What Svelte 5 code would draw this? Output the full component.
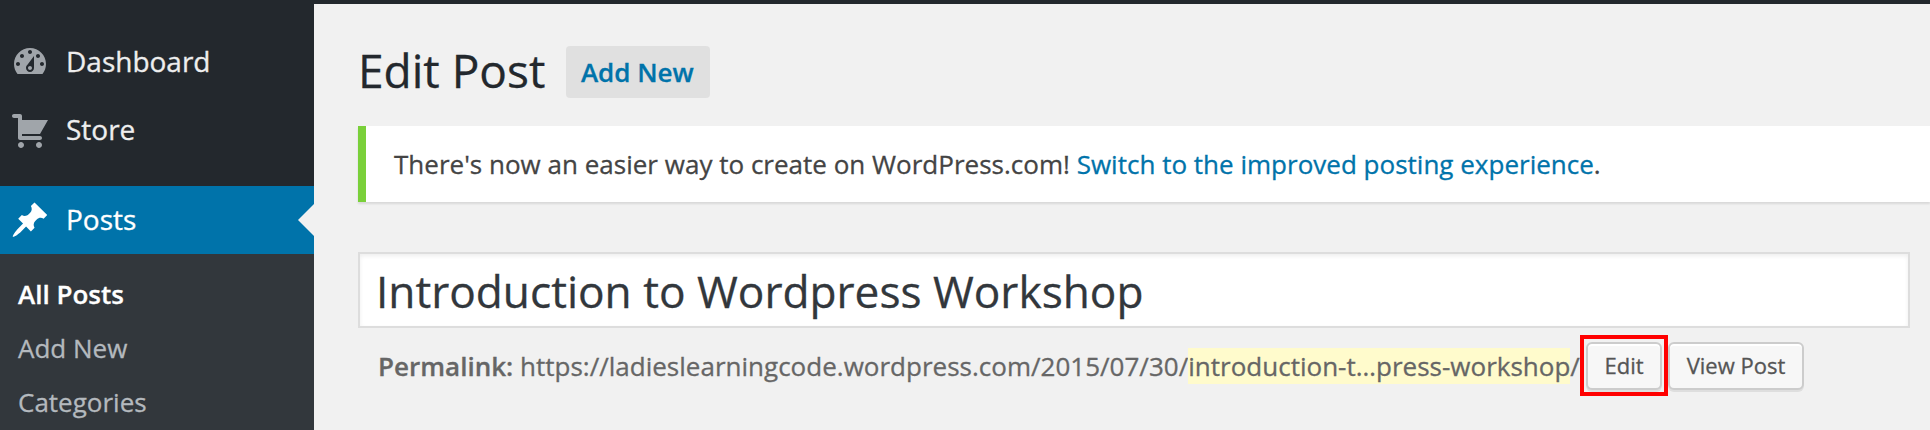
<script>
  const icons = {
    dashboard:
      'M3.76 16h12.48c1.1-1.37 1.76-3.11 1.76-5 0-4.42-3.58-8-8-8s-8 3.58-8 8c0 1.89.66 3.63 1.76 5zM10 4c.55 0 1 .45 1 1s-.45 1-1 1-1-.45-1-1 .45-1 1-1zM6 6c.55 0 1 .45 1 1s-.45 1-1 1-1-.45-1-1 .45-1 1-1zm8 0c.55 0 1 .45 1 1s-.45 1-1 1-1-.45-1-1 .45-1 1-1zm-5.37 5.55L12 7v6c0 1.1-.9 2-2 2s-2-.9-2-2c0-.57.24-1.08.63-1.45zM4 10c.55 0 1 .45 1 1s-.45 1-1 1-1-.45-1-1 .45-1 1-1zm12 0c.55 0 1 .45 1 1s-.45 1-1 1-1-.45-1-1 .45-1 1-1zm-5 3c0-.55-.45-1-1-1s-1 .45-1 1 .45 1 1 1 1-.45 1-1z',
    cart:
      'M6 13h9c.55 0 1 .45 1 1s-.45 1-1 1H5c-.55 0-1-.45-1-1V4H2c-.55 0-1-.45-1-1s.45-1 1-1h3c.55 0 1 .45 1 1v2h13l-4 7H6v1zm-.5 3c.83 0 1.5.67 1.5 1.5S6.33 19 5.5 19 4 18.33 4 17.5 4.67 16 5.5 16zm9 0c.83 0 1.5.67 1.5 1.5s-.67 1.5-1.5 1.5-1.5-.67-1.5-1.5.67-1.5 1.5-1.5z',
    pin:
      'M10.44 3.02l1.82-1.82 6.36 6.35-1.83 1.82c-1.05-.68-2.48-.57-3.41.36l-.75.75c-.92.93-1.04 2.35-.35 3.41l-1.83 1.82-2.41-2.41-2.8 2.79c-.42.42-3.38 2.71-3.8 2.29s1.86-3.39 2.28-3.81l2.79-2.79L4.1 9.36l1.83-1.82c1.05.69 2.48.57 3.4-.36l.75-.75c.93-.92 1.05-2.35.36-3.41z'
  };
  const menu = [
    { label: 'Dashboard', icon: 'dashboard' },
    { label: 'Store', icon: 'cart' },
    { label: 'Posts', icon: 'pin', current: true }
  ];
  const submenu = ['All Posts', 'Add New', 'Categories'];
</script>

<div class="page">
  <nav class="sidebar">
    {#each menu as item}
      <a class="item" class:current={item.current}>
        <svg viewBox="0 0 20 20" width="40" height="40"><path d={icons[item.icon]} /></svg>
        <span>{item.label}</span>
      </a>
    {/each}
    <div class="submenu">
      {#each submenu as label, i}
        <a class:active={i === 0}>{label}</a>
      {/each}
    </div>
  </nav>

  <main>
    <div class="adminbar"></div>
    <header>
      <h1>Edit Post</h1>
      <a class="add-new">Add New</a>
    </header>
    <div class="notice">
      <p>There's now an easier way to create on WordPress.com! <a>Switch to the improved posting experience</a>.</p>
    </div>
    <div class="title">Introduction to Wordpress Workshop</div>
    <div class="permalink">
      <p><strong>Permalink:</strong> <span>https://ladieslearningcode.wordpress.com/2015/07/30/<mark>introduction-t…press-workshop</mark>/</span></p>
      <div class="highlight"><button class="edit">Edit</button></div>
      <button class="view">View Post</button>
    </div>
  </main>
</div>

<style>
  .page {
    display: flex;
    width: 1930px;
    height: 430px;
    overflow: hidden;
    background: #f1f1f1;
    color: #444;
    font-family: 'Open Sans', sans-serif;
    font-size: 26px;
    -webkit-text-stroke-width: 0.3px;
  }
  .page * { box-sizing: border-box; }
  .sidebar {
    flex: none;
    display: flex;
    flex-direction: column;
    width: 314px;
    padding-top: 28px;
    background: #23282d;
  }
  .item {
    position: relative;
    flex: none;
    display: flex;
    align-items: center;
    gap: 16px;
    height: 68px;
    padding-left: 10px;
    color: #eee;
    font-size: 28px;
    line-height: 36px;
  }
  .item span { padding-bottom: 2px; }
  .item svg { fill: #a0a5aa; }
  .current { margin-top: 22px; background: #0073aa; color: #fff; }
  .current svg { fill: #fff; }
  .current::after {
    content: '';
    position: absolute;
    right: 0;
    top: 18px;
    border: 16px solid transparent;
    border-left: 0;
    border-right-color: #f1f1f1;
  }
  .submenu {
    flex: 1;
    display: flex;
    flex-direction: column;
    padding: 14px 0 0 18px;
    background: #32373c;
  }
  .submenu a { flex: none; height: 54px; line-height: 52px; color: #b4b9be; }
  .submenu .active { color: #fff; font-weight: 600; }
  main { flex: 1; min-width: 0; display: flex; flex-direction: column; }
  .adminbar { flex: none; height: 4px; background: #23282d; }
  header {
    flex: none;
    display: flex;
    align-items: center;
    gap: 21px;
    height: 122px;
    padding: 14px 0 0 44px;
  }
  h1 {
    margin: 0;
    padding-bottom: 4px;
    font-size: 46px;
    font-weight: 400;
    line-height: 58px;
    color: #23282d;
  }
  .add-new {
    width: 144px;
    height: 52px;
    padding-right: 2px;
    border-radius: 4px;
    background: #e0e0e0;
    color: #0073aa;
    font-weight: 600;
    line-height: 52px;
    text-align: center;
  }
  .notice {
    flex: none;
    height: 76px;
    margin-left: 44px;
    padding-left: 28px;
    border-left: 8px solid #7ad03a;
    background: #fff;
    box-shadow: 0 2px 2px rgba(0, 0, 0, 0.1);
    letter-spacing: 0.01px;
  }
  p { margin: 0; line-height: 76px; white-space: nowrap; }
  .notice a { color: #0073aa; }
  .title {
    flex: none;
    height: 76px;
    margin: 50px 20px 0 44px;
    padding-left: 16px;
    border: 2px solid #ddd;
    background: #fff;
    box-shadow: inset 0 2px 4px rgba(0, 0, 0, 0.07);
    color: #32373c;
    font-size: 44.2px;
    line-height: 74px;
  }
  .permalink {
    display: flex;
    align-items: flex-start;
    margin-top: 7px;
    padding-left: 64px;
    color: #666;
  }
  .permalink p { width: 1202px; line-height: 62px; letter-spacing: 0.01px; }
  .permalink strong { font-weight: 600; }
  mark { background: #fffbcc; color: inherit; padding: 0; }
  .highlight { flex: none; width: 88px; height: 61px; padding: 3px 2px; border: 4px solid #f00; }
  button {
    display: block;
    height: 48px;
    padding: 0;
    border: 2px solid #ccc;
    border-radius: 6px;
    background: #f7f7f7;
    box-shadow: inset 0 2px 0 #fff, 0 2px 0 rgba(0, 0, 0, 0.08);
    color: #555;
    font: 22px/42px 'Open Sans', sans-serif;
    padding-bottom: 2px;
  }
  .edit { width: 76px; }
  .view { width: 136px; margin-top: 7px; }
</style>
